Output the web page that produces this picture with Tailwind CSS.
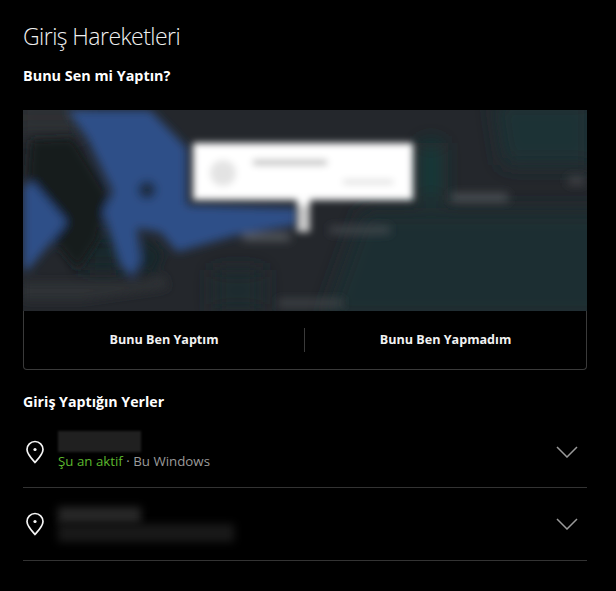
<!DOCTYPE html>
<html lang="tr">
<head>
  <meta charset="UTF-8">
  <title>Giriş Hareketleri</title>
  <script src="https://cdn.jsdelivr.net/npm/@tailwindcss/browser@4"></script>
</head>
<body class="bg-black min-h-screen font-['Open_Sans',sans-serif] text-white overflow-hidden">
  <main class="w-[564px] ml-[23px] pt-[21px]">
    <h1 class="text-[23px] leading-[31px] font-light tracking-[-0.55px] text-[#f0f0f0]">Giriş Hareketleri</h1>
    <h2 class="mt-[14px] text-[14.4px] leading-[20px] font-bold">Bunu Sen mi Yaptın?</h2>

    <section class="mt-[24px] h-[260px] rounded-b-[4px] border border-t-0 border-[#3a3a3a] flex flex-col">
      <svg class="block -mx-px w-[564px] h-[201px] shrink-0" viewBox="0 0 564 201">
        <defs>
          <filter id="b8" x="-20%" y="-20%" width="140%" height="140%"><feGaussianBlur stdDeviation="10"/></filter>
          <filter id="b4" x="-20%" y="-20%" width="140%" height="140%"><feGaussianBlur stdDeviation="5"/></filter>
          <filter id="b3" x="-20%" y="-20%" width="140%" height="140%"><feGaussianBlur stdDeviation="3.5"/></filter>
          <clipPath id="map"><rect width="564" height="201"/></clipPath>
        </defs>
        <g clip-path="url(#map)">
          <rect width="564" height="201" fill="#24272c"/>
          <g filter="url(#b8)">
            <path d="M340 100 H600 V210 H300Z" fill="#1d2f33"/>
            <path d="M470 -10 H570 V55 H480Z" fill="#1f3036"/>
            <path d="M398 33 H418 V90 H398Z" fill="#143c3a"/>
            <path d="M190 160 H240 V201 H190Z" fill="#1a2c2e"/>
            <path d="M60 125 H100 V160 H60Z" fill="#182729"/>
            <path d="M-10 -10 H60 V25 H-10Z" fill="#2e3034"/>
          </g>
          <g filter="url(#b4)">
            <path d="M8 30 L50 28 L85 85 L75 130 L55 160 L30 130 L35 105 L5 65Z" fill="#191b1f"/>
            <path d="M44 0 H127 L164 38 V95 L274 98 V115 L214 125 L154 142 L137 122 L114 118 L118 150 L110 168 L97 155 L80 102 L90 82 L64 28Z" fill="#2f4f88"/>
            <path d="M0 75 L10 72 L44 112 L30 130 L5 160 H0Z" fill="#2f4f88"/>
            <circle cx="124" cy="80" r="9" fill="#1e2c3e"/>
            <path d="M122 125 L140 145 L130 165 L118 160Z" fill="#14282c"/>
            <path d="M0 172 H120 L140 165 L145 178 L60 190 H0Z" fill="#2e3136"/>
            <path d="M220 124 H267 V130 H220Z" fill="#62666a"/>
            <path d="M307 117 H367 V123 H307Z" fill="#4a4e52"/>
            <path d="M428 84 H485 V91 H428Z" fill="#55585b"/>
            <path d="M255 190 H320 V196 H255Z" fill="#45484b"/>
            <path d="M545 67 H562 V74 H545Z" fill="#44474a"/>
          </g>
          <g filter="url(#b3)">
            <path d="M170 33 H390 V90 H287 V122 H274 V90 H170Z" fill="#fff"/>
            <path d="M274 95 H287 V122 H274Z" fill="#c9c9c9"/>
            <circle cx="200" cy="63" r="13" fill="#e3e3e3"/>
            <path d="M230 50 H304 V55 H230Z" fill="#b5b5b5"/>
            <path d="M320 70 H370 V74 H320Z" fill="#d8d8d8"/>
          </g>
        </g>
      </svg>
      <div class="flex-1 grid grid-cols-2 items-center text-[12.6px] font-bold text-[#f2f2f2]">
        <button class="h-[24px] border-r border-[#3a3a3a] leading-[24px]">Bunu Ben Yaptım</button>
        <button class="h-[24px] leading-[24px]">Bunu Ben Yapmadım</button>
      </div>
    </section>

    <h2 class="mt-[22px] text-[14.2px] leading-[20px] font-bold">Giriş Yaptığın Yerler</h2>

    <ul>
      <li class="h-[76px] border-b border-[#333] flex items-center pt-[4px]">
        <svg class="ml-[2px] w-[20px] h-[24px] shrink-0" viewBox="0 0 20 24" fill="none" stroke="#f5f5f5" stroke-width="1.7">
          <path d="M10 22.5 C6.5 18.5 2 14 2 9.5 a8 8 0 0 1 16 0 C18 14 13.5 18.5 10 22.5Z" stroke-linejoin="round"/>
          <circle cx="10" cy="9.5" r="1.6" fill="#f5f5f5" stroke="none"/>
        </svg>
        <div class="ml-[13px] flex-1 mb-[3px]">
          <div class="w-[83px] h-[21px] bg-[#202020] blur-[1px]"></div>
          <p class="text-[13.3px] leading-[18px] text-[#9a9a9a]"><span class="text-[#5cb82e]">Şu an aktif</span> · Bu Windows</p>
        </div>
        <svg class="mr-[9px] w-[22px] h-[12px]" viewBox="0 0 22 12" fill="none" stroke="#9a9a9a" stroke-width="1.5"><path d="M1 1 L11 11 L21 1"/></svg>
      </li>
      <li class="h-[73px] border-b border-[#333] flex items-center">
        <svg class="ml-[2px] w-[20px] h-[24px] shrink-0" viewBox="0 0 20 24" fill="none" stroke="#f5f5f5" stroke-width="1.7">
          <path d="M10 22.5 C6.5 18.5 2 14 2 9.5 a8 8 0 0 1 16 0 C18 14 13.5 18.5 10 22.5Z" stroke-linejoin="round"/>
          <circle cx="10" cy="9.5" r="1.6" fill="#f5f5f5" stroke="none"/>
        </svg>
        <div class="ml-[13px] flex-1">
          <div class="w-[83px] h-[17px] bg-[#282828] blur-[4px]"></div>
          <div class="w-[176px] h-[18px] bg-[#191919] blur-[4px]"></div>
        </div>
        <svg class="mr-[9px] w-[22px] h-[12px]" viewBox="0 0 22 12" fill="none" stroke="#9a9a9a" stroke-width="1.5"><path d="M1 1 L11 11 L21 1"/></svg>
      </li>
    </ul>
  </main>
</body>
</html>
